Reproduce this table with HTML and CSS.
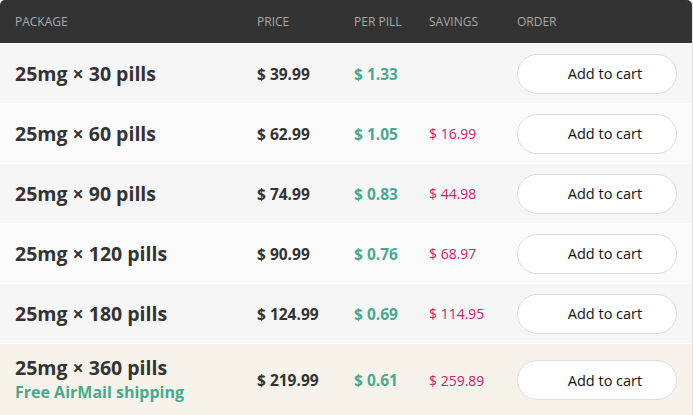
FILE: index.html
```html
<!DOCTYPE html>
<html>
<head>
<meta charset="utf-8">
<link rel="stylesheet" href="styles.css">
</head>
<body>
<div class="table">
  <div class="head">
    <div>Package</div><div>Price</div><div>Per pill</div><div>Savings</div><div>Order</div>
  </div>
  <div class="row odd">
    <div class="pkg">25mg × 30 pills</div><div class="price">$ 39.99</div><div class="per">$ 1.33</div><div class="save"></div><div><button class="btn">Add to cart</button></div>
  </div>
  <div class="row even">
    <div class="pkg">25mg × 60 pills</div><div class="price">$ 62.99</div><div class="per">$ 1.05</div><div class="save">$ 16.99</div><div><button class="btn">Add to cart</button></div>
  </div>
  <div class="row odd">
    <div class="pkg">25mg × 90 pills</div><div class="price">$ 74.99</div><div class="per">$ 0.83</div><div class="save">$ 44.98</div><div><button class="btn">Add to cart</button></div>
  </div>
  <div class="row even">
    <div class="pkg">25mg × 120 pills</div><div class="price">$ 90.99</div><div class="per">$ 0.76</div><div class="save">$ 68.97</div><div><button class="btn">Add to cart</button></div>
  </div>
  <div class="row odd">
    <div class="pkg">25mg × 180 pills</div><div class="price">$ 124.99</div><div class="per">$ 0.69</div><div class="save">$ 114.95</div><div><button class="btn">Add to cart</button></div>
  </div>
  <div class="row best">
    <div class="pkg">25mg × 360 pills<span class="free">Free AirMail shipping</span></div><div class="price">$ 219.99</div><div class="per">$ 0.61</div><div class="save">$ 259.89</div><div><button class="btn">Add to cart</button></div>
  </div>
</div>
</body>
</html>
```
FILE: styles.css
```css
html, body {
  margin: 0;
  padding: 0;
  background: #ffffff;
}
body {
  font-family: "Open Sans", "Liberation Sans", sans-serif;
  width: 693px;
  height: 415px;
  overflow: hidden;
}
.table {
  width: 692px;
  border-right: 1px solid #e2e2e2;
}
.head, .row {
  display: grid;
  grid-template-columns: 242px 97px 75px 88px 1fr;
  padding-left: 15px;
  align-items: center;
}
.head {
  height: 43px;
  background: #333333;
  border-radius: 5px 5px 0 0;
  color: #a9a9a9;
  font-size: 12px;
  text-transform: uppercase;
  font-weight: 400;
}
.row {
  height: 59px;
  border-top: 1px solid #ffffff;
}
.odd { background: #f6f6f6; }
.even { background: #fbfbfb; }
.best {
  background: #f5f3ea;
  height: 72px;
}
.pkg {
  font-size: 19.5px;
  font-weight: 700;
  color: #333333;
}
.free {
  display: block;
  font-size: 16px;
  color: #48a98f;
  line-height: 22px;
}
.best .pkg { line-height: 26px; padding-bottom: 3px; }
.price {
  font-size: 15.5px;
  font-weight: 700;
  color: #333333;
}
.per {
  font-size: 15.5px;
  font-weight: 700;
  color: #48a98f;
}
.save {
  font-size: 14px;
  color: #d42066;
}
.btn {
  display: block;
  width: 160px;
  height: 40px;
  margin: 0;
  padding: 0 0 0 16px;
  border: 1px solid #dcdcdc;
  border-radius: 20px;
  background: #ffffff;
  font-family: "Open Sans", "Liberation Sans", sans-serif;
  font-size: 14.5px;
  color: #111111;
  text-align: center;
}
```
